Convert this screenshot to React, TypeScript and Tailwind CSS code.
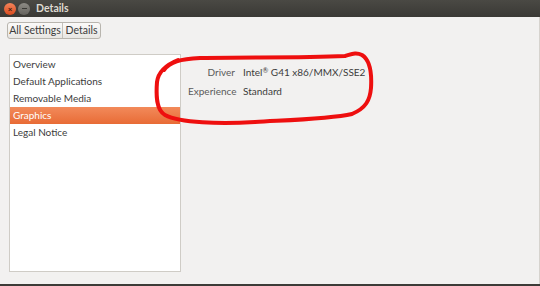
import React from "react";

const items = ["Overview", "Default Applications", "Removable Media", "Graphics", "Legal Notice"];

export default function App() {
  return (
    <div
      className="relative w-[540px] h-[286px] bg-[#f2f1f0] overflow-hidden flex flex-col text-[#3c3c3c]"
      style={{ fontFamily: 'Lato, "Open Sans", sans-serif' }}
    >
      {/* title bar */}
      <div className="h-[17px] shrink-0 bg-gradient-to-b from-[#4a4944] to-[#3a3935] flex items-center pl-[4px] gap-[2px]">
        <span className="w-[12px] h-[12px] rounded-full bg-gradient-to-b from-[#f6845a] to-[#d84a1b] flex items-center justify-center text-[8px] leading-none text-[#3c1a0e] font-bold">
          ×
        </span>
        <span className="w-[12px] h-[12px] rounded-full bg-gradient-to-b from-[#8e8c86] to-[#64625d] flex items-center justify-center">
          <span className="w-[5px] h-[1px] bg-[#3b3a36]" />
        </span>
        <span className="ml-[4px] text-[10.5px] font-bold text-[#dfdbd2]">Details</span>
      </div>

      <div className="flex-1 flex flex-col border-r border-[#d6d3ce] px-[7px]">
        {/* breadcrumb */}
        <div className="mt-[5px] flex h-[17px] w-fit rounded-[3px] border border-[#b8b5ae] bg-gradient-to-b from-[#fbfaf9] to-[#e8e6e2] text-[10.5px] leading-none">
          <span className="w-[55px] justify-center flex items-center border-r border-[#c4c1ba]">All Settings</span>
          <span className="w-[37px] justify-center flex items-center">Details</span>
        </div>

        <div className="mt-[15px] flex flex-1 mb-[12px]">
          {/* sidebar list */}
          <div className="ml-[2px] w-[172px] bg-white border border-[#cfccc6] pt-[1px]">
            {items.map((it) => (
              <div
                key={it}
                className={
                  "h-[17px] flex items-center px-[3px] text-[10px] " +
                  (it === "Graphics" ? "bg-gradient-to-b from-[#f28a5a] to-[#e86b35] text-white" : "")
                }
              >
                {it}
              </div>
            ))}
          </div>

          {/* details */}
          <div className="pt-[11px] pl-[7px] text-[10px]">
            <div className="grid grid-cols-[47px_auto] gap-x-[8px] gap-y-[4px]">
              <span className="text-right text-[#5a5a5a]">Driver</span>
              <span>
                Intel<sup className="text-[7px]">®</sup> G41 x86/MMX/SSE2
              </span>
              <span className="text-right text-[#5a5a5a]">Experience</span>
              <span>Standard</span>
            </div>
          </div>
        </div>
      </div>
      <div className="h-[2px] shrink-0 bg-[#3c3b37]" />

      {/* red annotation */}
      <svg className="absolute inset-0 pointer-events-none" width="540" height="286" viewBox="0 0 540 286">
        <path
          d="M164 70 C 170 62, 180 59, 200 58 C 250 57, 300 58, 345 56 C 352 54, 356 52, 362 55 C 370 60, 372 72, 371 88 C 370 100, 366 108, 352 114 C 330 119, 290 120, 255 122 C 220 124, 180 123, 165 115 C 156 110, 156 95, 157 82 C 158 74, 163 66, 178 60"
          fill="none"
          stroke="#ee0f0f"
          strokeWidth="4"
          strokeLinecap="round"
          strokeLinejoin="round"
        />
      </svg>
    </div>
  );
}
